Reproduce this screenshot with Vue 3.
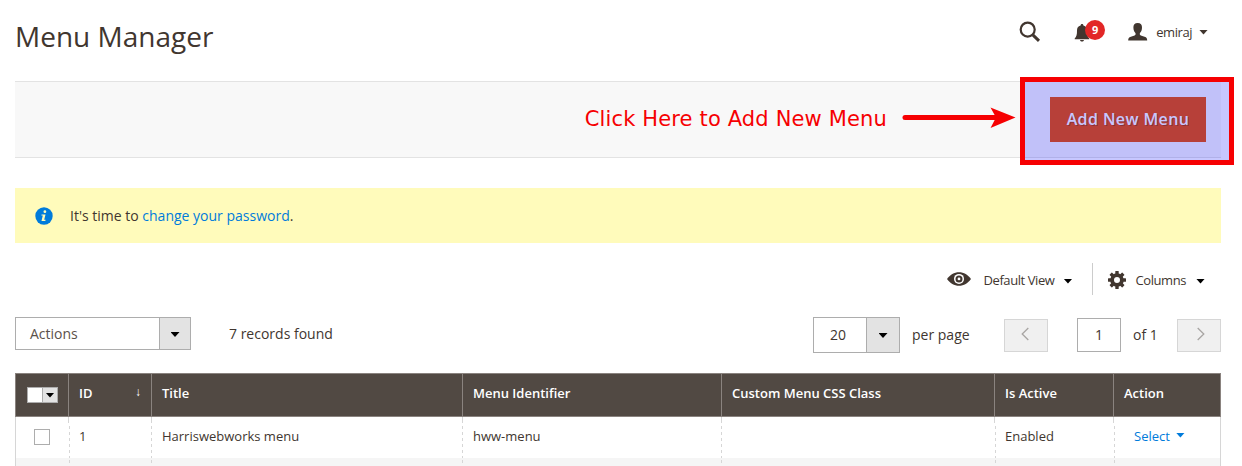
<script setup>
const headers = ['Title', 'Menu Identifier', 'Custom Menu CSS Class', 'Is Active', 'Action']
const row = { id: 1, title: 'Harriswebworks menu', identifier: 'hww-menu', css: '', active: 'Enabled' }
</script>

<template>
  <div class="page">
    <header class="top">
      <h1><span class="t">Menu Manager</span></h1>
      <div class="tools">
        <svg class="search" width="22" height="22" viewBox="0 0 22 22"><circle cx="8.7" cy="8.6" r="7" fill="none" stroke="#41362f" stroke-width="2.2" /><path d="M13.8 13.8L20 19.8" stroke="#41362f" stroke-width="3" /></svg>
        <div class="bell">
          <svg width="16" height="18" viewBox="0 0 16 18" fill="#41362f"><path d="M8 0c1 0 1.4.7 1.4 1.4C12 2 13 4 13 6.5c0 4 .4 6 2.3 7.9v.8H.7v-.8C2.600 12.500 3 10.500 3 6.500 3 4 4 2 6.600 1.400 6.600.700 7 0 8 0zM6 16h4c-.3 1.200-1 1.600-2 1.600S6.300 17.200 6 16z" /></svg>
          <b>9</b>
        </div>
        <svg class="person" width="20" height="18" viewBox="0 0 20 18" fill="#41362f"><path d="M9.700 0c3 0 4.500 2 4.300 4.800-.1 2.500-.9 4.200-2 5.200-.5 1.100-.2 2 .8 2.400l4.500 1.500c1.300.5 1.900 1.500 1.900 3.500H.2c0-2 .6-3 1.900-3.500l4.500-1.500c1-.4 1.300-1.300.8-2.400-1.100-1-1.900-2.700-2-5.200C5.200 2 6.700 0 9.700 0z" /></svg>
        <span class="user t">emiraj</span>
        <i class="caret dark"></i>
      </div>
    </header>

    <section class="bar">
      <div class="note">
        <span class="t">Click Here to Add New Menu</span>
        <svg width="114" height="22" viewBox="0 0 114 22"><path d="M3 10.500H95" stroke="#f60002" stroke-width="5" stroke-linecap="round" /><path d="M88.500.500L113.500 10.500 88.500 21 94 10.500z" fill="#f60002" /></svg>
      </div>
      <button class="add"><span class="t">Add New Menu</span></button>
      <div class="highlight"></div>
    </section>

    <section class="message">
      <svg width="18" height="18" viewBox="0 0 18 18"><circle cx="9" cy="9" r="8.700" fill="#007bdb" /><circle cx="9.900" cy="4.700" r="1.400" fill="#fffbbb" /><path d="M6.600 7.500h3.900l-1.300 5.300h1.400l-.3 1.100H6.500l1.300-5.300H6.400z" fill="#fffbbb" /></svg>
      <span class="t">It's time to <a>change your password</a>.</span>
    </section>

    <section class="views">
      <div class="view">
        <svg width="24" height="14" viewBox="0 0 24 14"><path d="M0 7C3 2.700 7.200.200 12 .200S21 2.700 24 7c-3 4.300-7.200 6.800-12 6.800S3 11.300 0 7z" fill="#41362f" /><circle cx="12" cy="6.900" r="5" fill="#fff" /><circle cx="12" cy="6.900" r="3.500" fill="#41362f" /><circle cx="12" cy="6.900" r="1.400" fill="#fff" /></svg>
        <span class="t">Default View</span>
        <i class="caret"></i>
      </div>
      <div class="columns">
        <svg width="18" height="18" viewBox="-9 -9 18 18"><g fill="#41362f"><rect v-for="n in 8" :key="n" x="-1.700" y="-9" width="3.400" height="5" rx=".5" :transform="`rotate(${n * 45})`" /></g><circle r="4.900" fill="none" stroke="#41362f" stroke-width="3.800" /></svg>
        <span class="t">Columns</span>
        <i class="caret"></i>
      </div>
    </section>

    <section class="controls">
      <div class="select actions"><span class="t">Actions</span><div><i class="caret"></i></div></div>
      <span class="records t">7 records found</span>
      <div class="select size"><span class="t">20</span><div><i class="caret"></i></div></div>
      <span class="per t">per page</span>
      <button class="pager prev"><svg width="8" height="14" viewBox="0 0 8 14"><path d="M7.300 1L1.200 7l6.100 6" /></svg></button>
      <div class="current"><span class="t">1</span></div>
      <span class="of t">of 1</span>
      <button class="pager following"><svg width="8" height="14" viewBox="0 0 8 14"><path d="M.7 1l6.100 6-6.100 6" /></svg></button>
    </section>

    <section class="table">
      <div class="line head">
        <div class="cell pick"><div class="multi"><s></s><div><i class="caret"></i></div></div></div>
        <div class="cell"><span class="t">ID</span><span class="sort">↓</span></div>
        <div v-for="h in headers" :key="h" class="cell"><span class="t">{{ h }}</span></div>
      </div>
      <div class="line body">
        <div class="cell pick"><span class="box"></span></div>
        <div class="cell"><span class="t">{{ row.id }}</span></div>
        <div class="cell"><span class="t">{{ row.title }}</span></div>
        <div class="cell"><span class="t">{{ row.identifier }}</span></div>
        <div class="cell">{{ row.css }}</div>
        <div class="cell"><span class="t">{{ row.active }}</span></div>
        <div class="cell act"><a class="t">Select</a><i class="caret blue"></i></div>
      </div>
      <div class="line body next"><div v-for="n in 7" :key="n" class="cell"></div></div>
    </section>
  </div>
</template>

<style>
body { background: #fff; overflow: hidden; }
</style>

<style scoped>
* { box-sizing: border-box; }
.page { width: 1242px; height: 466px; overflow: hidden; padding: 0 21px 0 15px; font: 14px/20px "Open Sans", sans-serif; color: #41362f; }
.t { white-space: nowrap; }
svg { display: block; flex: none; }
a { color: #007bdb; }
button { font: inherit; padding: 0; display: flex; align-items: center; justify-content: center; }
.caret { flex: none; width: 9px; height: 5px; background: #000; clip-path: polygon(0 0, 100% 0, 50% 100%); }
.caret.dark { background: #41362f; }
.caret.blue { background: #007bdb; margin: 0 0 2px 6px; }

.top { height: 81px; display: flex; justify-content: space-between; align-items: flex-start; }
h1 { margin: 16px 0 0; font-size: 28px; line-height: 40px; font-weight: 400; }
.tools { display: flex; align-items: center; height: 20px; margin: 22px 13px 0 0; }
.search { margin-right: 33px; }
.bell { width: 32px; height: 20px; display: flex; align-items: flex-start; padding-top: 2px; margin-right: 22px; }
.bell b { flex: none; width: 20px; height: 20px; margin: -4px 0 0 -5px; border-radius: 50%; background: #e22626; color: #fff; font-size: 11px; line-height: 20px; font-weight: 700; text-align: center; }
.person { margin-right: 8px; }
.user { font-size: 13px; letter-spacing: -.45px; margin-right: 7px; }

.bar { position: relative; height: 77px; border: solid #e3e3e3; border-width: 1px 0; background: #f8f8f8; display: flex; align-items: center; justify-content: flex-end; padding-right: 15px; }
.note { display: flex; align-items: center; gap: 15px; margin-right: 34px; color: #f60002; font: 21px/26px "DejaVu Sans", sans-serif; letter-spacing: .15px; }
.note .t { margin-bottom: 2px; }
.note svg { margin-bottom: 3px; }
.add { width: 156px; height: 45px; border: 0; background: #eb5202; color: #fff; font-size: 16px; font-weight: 600; letter-spacing: .4px; text-shadow: 1px 1px 0 rgba(0, 0, 0, .25); }
.add .t { margin-bottom: 2px; }
.highlight { position: absolute; left: 1005px; top: -5px; width: 214px; height: 88px; border: 5px solid #f60002; background: rgba(0, 0, 255, .22); background-clip: padding-box; }

.message { height: 55px; margin-top: 30px; padding-left: 20px; display: flex; align-items: center; gap: 17px; background: #fffbbb; }
.views { margin-top: 20px; height: 32px; display: flex; justify-content: flex-end; font-size: 13px; letter-spacing: -.42px; }
.view, .columns { display: flex; align-items: center; }
.view .t, .columns .t { margin-top: 2px; }
.view svg { margin-right: 13px; }
.view .caret { margin: 4px 20px 0 9px; }
.columns { border-left: 1px solid #ccc; padding-left: 15px; }
.columns svg { margin: 2px 9px 0 0; }
.columns .caret { margin: 4px 16px 0 10px; }

.controls { margin-top: 22px; height: 36px; display: flex; align-items: center; }
.select { display: flex; height: 33px; border: 1px solid #adadad; background: #fff; }
.select > span { flex: 1; align-self: center; }
.select > div { border-left: 1px solid #adadad; background: #e3e3e3; display: flex; align-items: center; justify-content: center; }
.select .caret { margin-top: 2px; }
.actions { width: 176px; align-self: flex-start; color: #5b514b; }
.actions > span { padding-left: 14px; }
.actions > div { width: 31px; }
.records { margin: -2px auto 0 38px; }
.size { width: 87px; height: 36px; }
.size > span { padding-left: 16px; }
.size > div { width: 33px; }
.size .caret { margin-top: 1px; }
.per { width: 58px; margin-left: 12px; margin-right: 34px; }
.pager { width: 44px; height: 33px; border: 1px solid #d6d6d6; background: #f0f0f0; }
.pager svg { margin-bottom: 3px; fill: none; stroke: #a8a5a3; stroke-width: 1.300; }
.prev svg { margin-right: 3px; }
.following svg { margin-left: 3px; }
.current { width: 44px; height: 34px; margin: 0 12px 0 29px; border: 1px solid #adadad; display: flex; align-items: center; justify-content: center; }
.of { width: 24px; margin-right: 20px; }

.table { margin-top: 20px; width: 1206px; font-size: 13px; }
.line { display: grid; grid-template-columns: 53px 83px 311px 259px 273px 119px 108px; }
.cell { display: flex; align-items: center; padding: 0 10px; border-left: 1px solid #8a837f; }
.head { height: 44px; background: #514943; color: #fff; font-weight: 600; border: solid #8a837f; border-width: 1px 0; }
.head .cell > .t { margin-bottom: 4px; }
.line .cell:last-child { border-right: 1px solid #8a837f; }
.cell.pick { padding: 0; justify-content: center; }
.multi { display: flex; width: 31px; height: 16px; margin-left: 1px; border: 1px solid #adadad; background: #fff; }
.multi s { flex: 1; }
.multi > div { width: 15px; border-left: 1px solid #adadad; background: #e3e3e3; display: flex; align-items: center; justify-content: center; }
.sort { margin: 0 0 7px auto; font-size: 12px; font-weight: 400; }
.body { height: 41px; }
.body .cell { border-left-color: transparent; padding-bottom: 3px; background: linear-gradient(#d6d6d6, #d6d6d6) 0 0 / 1px 6px no-repeat border-box, repeating-linear-gradient(transparent 0 3px, #d6d6d6 3px 6px) 0 6px / 1px 100% no-repeat border-box; }
.body .cell:first-child { border-left: 1px solid #d6d6d6; background: none; }
.line.body .cell:last-child { border-right: 1px solid #d6d6d6; }
.body .cell:nth-child(2), .body .cell:nth-child(6), .body .cell:nth-child(7) { background-position: 0 0, 1px 6px; }
.box { width: 16px; height: 16px; border: 1px solid #adadad; margin: 2px 1px 0 0; }
.body .cell.act { padding-left: 20px; }
.next { background: #f5f5f5; }
.next .cell { background-size: 0 0, 1px 100%; background-position: 0 0, 0 -1px; }
.body.next .cell:nth-child(2), .body.next .cell:nth-child(6), .body.next .cell:nth-child(7) { background-position: 0 0, 1px -1px; }
</style>
